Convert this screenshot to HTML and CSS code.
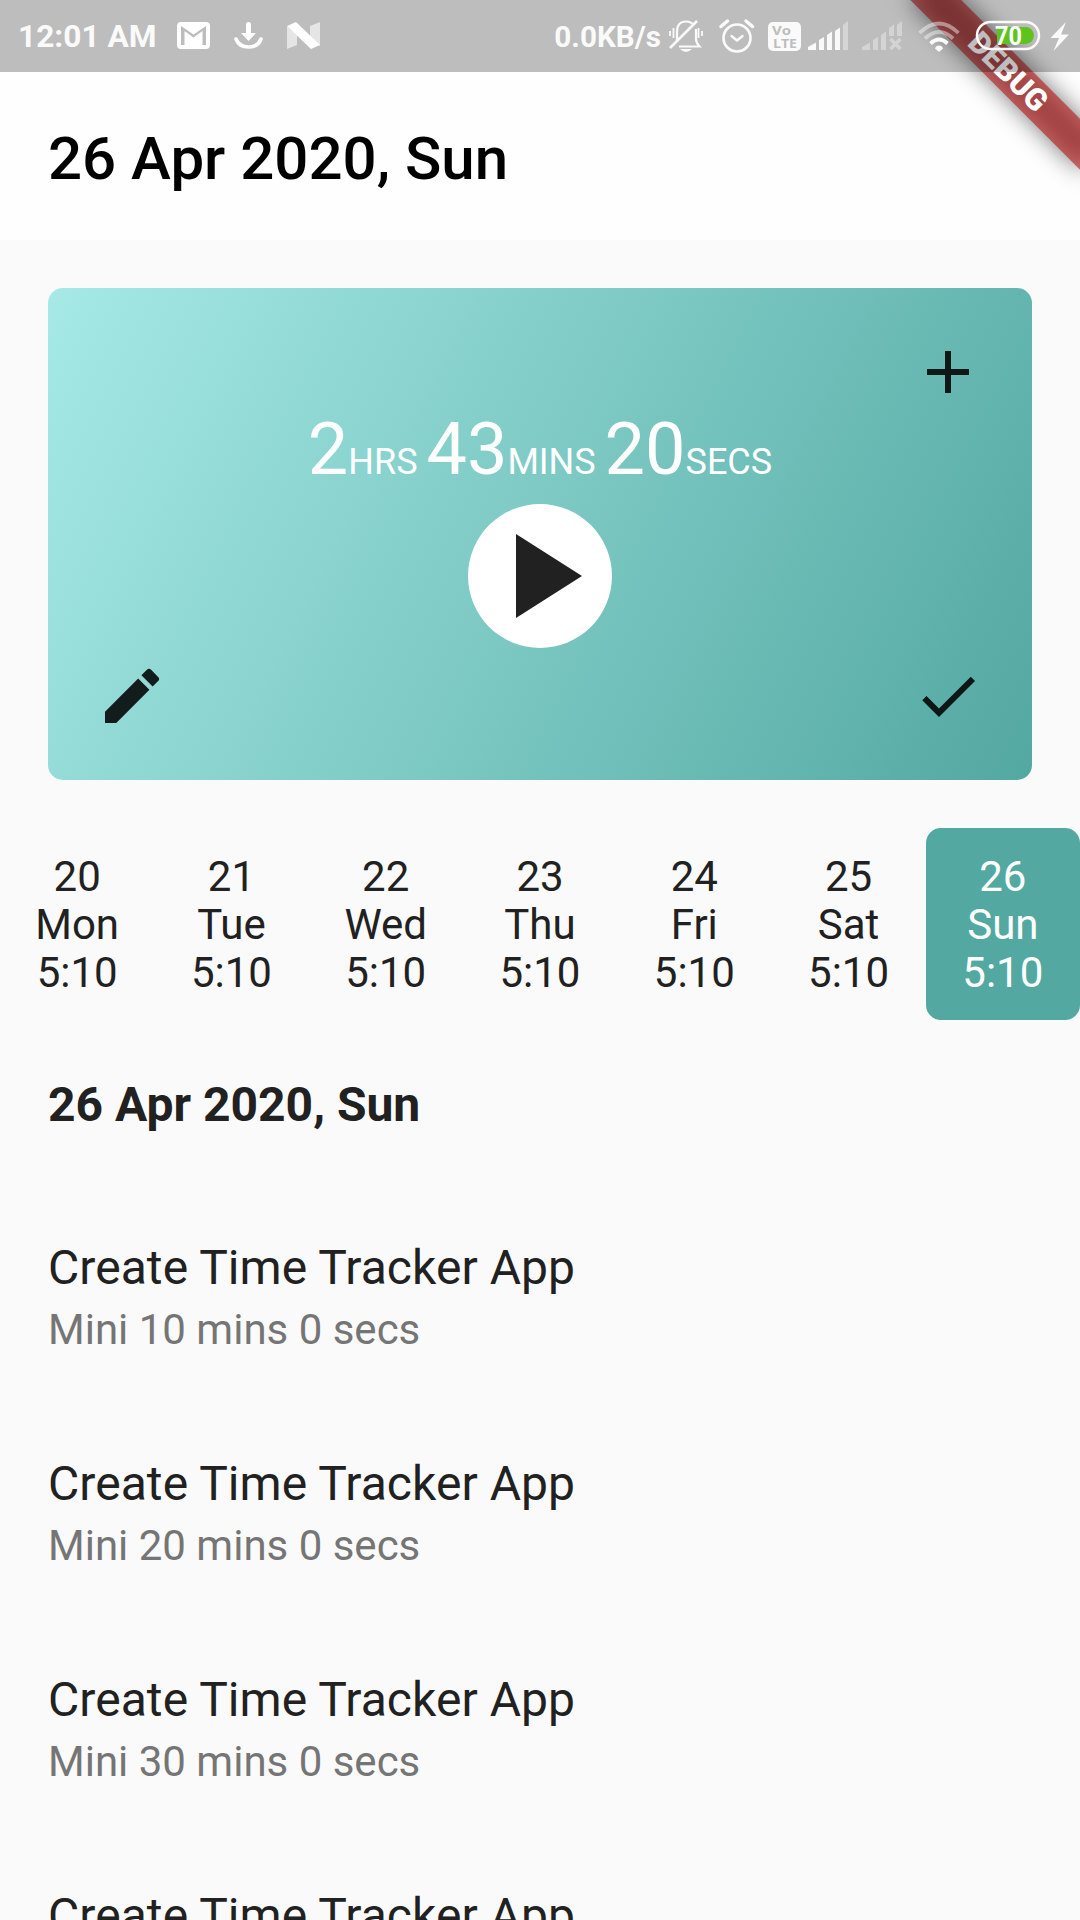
FILE: index.html
```html
<!DOCTYPE html>
<html lang="en">
<head>
<meta charset="utf-8">
<title>Time Tracker</title>
<link rel="stylesheet" href="styles.css">
</head>
<body>
<div class="screen">
  <header class="top">
    <div class="status">
      <span class="clock">12:01 AM</span>
      <svg class="icon" width="46" height="72" viewBox="170 0 46 72">
        <path fill="#fff" fill-rule="evenodd" d="M181 22h25a4 4 0 0 1 4 4v19a4 4 0 0 1-4 4h-25a4 4 0 0 1-4-4V26a4 4 0 0 1 4-4zM181 26v19h3.500V31l9 6.500 9-6.500v14h3.500V26l-12.500 8.600z"/>
      </svg>
      <svg class="icon" width="58" height="72" viewBox="216 0 58 72">
        <path fill="#fff" d="M246 24.500a2.500 2.500 0 0 1 5 0V33h5l-7.500 8-7.500-8h5z"/>
        <path d="M236 39q3 8 12.500 8T261 39" fill="none" stroke="#fff" stroke-width="3.600" stroke-linecap="round"/>
      </svg>
      <svg class="icon" width="50" height="72" viewBox="274 0 50 72">
        <path fill="#fff" opacity=".6" d="M287 26l10 9v10l-10 4zM320 22v24l-10-9V26z"/>
        <path fill="#fff" d="M287 26l9-4 24 23-9 4z"/>
      </svg>
      <span class="speed">0.0KB/s</span>
      <svg class="icon" width="48" height="72" viewBox="664 0 48 72">
        <g fill="none" stroke="#fafafa" stroke-width="2.200">
          <path d="M677 40V32q0-10.500 9-10.500 5 0 7.500 3.500M696 29v10q0 4 3.500 7.500H679"/>
          <path d="M670 48l27-27" stroke-width="2.500"/>
          <path d="M670 31v5M673.500 28v10M702 31v5M698.500 28v10" stroke-width="1.800"/>
        </g>
        <path fill="#fafafa" d="M680 49h12q-6 6-12 0z"/>
      </svg>
      <svg class="icon" width="50" height="72" viewBox="712 0 50 72">
        <g fill="none" stroke="#fafafa" stroke-width="2.700" stroke-linecap="round" stroke-linejoin="round">
          <circle cx="737" cy="38" r="13.500"/>
          <path d="M731.500 36l5.500 4.500 5.500-4.500" stroke-width="2.400"/>
          <path d="M721 26.500l6.500-5.500M752.500 26.500L746 21" stroke-width="3.500"/>
        </g>
      </svg>
      <svg class="icon" width="43" height="72" viewBox="762 0 43 72">
        <rect x="768" y="22" width="33" height="29" rx="5" fill="#fafafa"/>
        <text class="volte" x="772" y="34.500" textLength="19" lengthAdjust="spacingAndGlyphs">Vo</text>
        <text class="volte" x="773" y="47.500" textLength="24" lengthAdjust="spacingAndGlyphs">LTE</text>
      </svg>
      <svg class="icon" width="47" height="72" viewBox="805 0 47 72">
        <path fill="#fafafa" d="M808 50v-3l8-4.500V50zM819 50V40l5-3v13zM827 50V35l5-3.500V50zM835 50V31l5-3.500V50z"/>
        <path fill="#fafafa" opacity=".4" d="M843 50V25l5-4v29z"/>
      </svg>
      <svg class="icon" width="60" height="72" viewBox="852 0 60 72">
        <g opacity=".38">
          <path fill="#fafafa" d="M862 50v-3l8-4.500V50zM873 50V40l5-3v13zM881 50V35l5-3.500V50zM889 36v-8l5-3.500V36zM897 36V25l5-4v15z"/>
          <path d="M890.500 39l10 10M900.500 39l-10 10" stroke="#fafafa" stroke-width="3.500"/>
        </g>
      </svg>
      <svg class="icon" width="58" height="72" viewBox="912 0 58 72">
        <g fill="none" stroke="#fafafa" stroke-width="3.800">
          <path opacity=".45" d="M919.500 33q19.500-19 39 0M925 38.500q14-13 28 0"/>
          <path d="M930.500 43.500q8.500-8 17 0"/>
        </g>
        <path fill="#fafafa" d="M939 52l-4-3.500q1-3 4-3t4 3z"/>
      </svg>
      <svg class="icon" width="76" height="72" viewBox="970 0 76 72">
        <path fill="#5ec31f" d="M997 27h28.500a8.500 8.500 0 0 1 0 17H997z"/>
        <rect x="977" y="22" width="62" height="27" rx="13.500" fill="none" stroke="#fafafa" stroke-width="2.500"/>
        <text class="charge" x="995" y="44.500" textLength="27" lengthAdjust="spacingAndGlyphs">70</text>
      </svg>
      <svg class="icon" width="34" height="72" viewBox="1046 0 34 72">
        <path fill="#fafafa" d="M1066 22l-15.500 16h8.500l-5.500 13 15.500-16.500h-8z"/>
      </svg>
    </div>
    <h1 class="title">26 Apr 2020, Sun</h1>
    <div class="banner">DEBUG</div>
  </header>

  <main>
    <section class="timer">
      <svg class="action add" viewBox="0 0 24 24"><path d="M19 13h-6v6h-2v-6H5v-2h6V5h2v6h6v2z"/></svg>
      <div class="time"><span>2</span><small>HRS </small><span>43</span><small>MINS </small><span>20</span><small>SECS</small></div>
      <div class="play"><svg viewBox="0 0 24 24"><path d="M8 5v14l11-7z"/></svg></div>
      <svg class="action edit" viewBox="0 0 24 24"><path d="M3 17.250V21h3.750L17.810 9.940l-3.750-3.750L3 17.250zM20.710 7.040a.996.996 0 0 0 0-1.410l-2.340-2.340a.996.996 0 0 0-1.410 0l-1.830 1.830 3.750 3.750 1.830-1.830z"/></svg>
      <svg class="action done" viewBox="0 0 24 24"><path d="M9 16.170L4.830 12l-1.420 1.410L9 19 21 7l-1.410-1.410z"/></svg>
    </section>

    <section class="week">
      <div class="day"><span>20</span><span>Mon</span><span>5:10</span></div>
      <div class="day"><span>21</span><span>Tue</span><span>5:10</span></div>
      <div class="day"><span>22</span><span>Wed</span><span>5:10</span></div>
      <div class="day"><span>23</span><span>Thu</span><span>5:10</span></div>
      <div class="day"><span>24</span><span>Fri</span><span>5:10</span></div>
      <div class="day"><span>25</span><span>Sat</span><span>5:10</span></div>
      <div class="day selected"><span>26</span><span>Sun</span><span>5:10</span></div>
    </section>

    <h2 class="heading">26 Apr 2020, Sun</h2>
    <ul class="tasks">
      <li class="task"><span class="name">Create Time Tracker App</span><span class="spent">Mini 10 mins 0 secs</span></li>
      <li class="task"><span class="name">Create Time Tracker App</span><span class="spent">Mini 20 mins 0 secs</span></li>
      <li class="task"><span class="name">Create Time Tracker App</span><span class="spent">Mini 30 mins 0 secs</span></li>
      <li class="task"><span class="name">Create Time Tracker App</span></li>
    </ul>
  </main>
</div>
</body>
</html>
```

FILE: styles.css
```css
* { box-sizing: border-box; }

body {
  margin: 0;
  background: #fafafa;
  color: #212121;
  font-family: Roboto, sans-serif;
}

.screen {
  width: 1080px;
  height: 1920px;
  overflow: hidden;
}

.top {
  position: relative;
  height: 240px;
  background: #fefefe;
  overflow: hidden;
}

.status {
  position: relative;
  z-index: 2;
  display: flex;
  height: 72px;
  background: rgba(0, 0, 0, 0.255);
  color: #fafafa;
  font-size: 31.700px;
  font-weight: 700;
  line-height: 73px;
  white-space: nowrap;
}

.icon { flex: none; display: block; }

.clock {
  width: 170px;
  padding-left: 18px;
}

.speed {
  width: 340px;
  padding-right: 3px;
  font-size: 29.700px;
  text-align: right;
}

.volte {
  fill: #bdbdbd;
  font: 700 12.500px "Open Sans", sans-serif;
}

.charge {
  fill: #fafafa;
  font: 700 26px Roboto, sans-serif;
}

.title {
  margin: 0;
  padding: 51px 48px 0;
  color: #000;
  font-size: 60px;
  font-weight: 500;
  line-height: 72px;
}

/* Corner ribbon, rotated round the top right corner of the screen */
.banner {
  position: absolute;
  z-index: 1;
  top: 84px;
  left: 960px;
  width: 240px;
  height: 36px;
  color: #fff;
  font-size: 30.600px;
  font-weight: 900;
  line-height: 36px;
  text-align: center;
  transform: rotate(45deg);
  transform-origin: 120px -84px;
}

.banner::before,
.banner::after {
  content: "";
  position: absolute;
  z-index: -1;
  inset: 0;
}

/* Soft shadow that also darkens the translucent ribbon */
.banner::before {
  background: rgba(0, 0, 0, 0.52);
  filter: blur(12px);
}

.banner::after { background: rgba(183, 28, 28, 0.627); }

.timer {
  display: grid;
  grid-template-columns: 72px 1fr 72px;
  grid-template-rows: 72px 96px 156px 72px;
  height: 492px;
  margin: 48px 48px 0;
  padding: 48px;
  border-radius: 15px;
  background: linear-gradient(116.565deg, #a6e9e6, #53a8a1);
}

.action {
  width: 72px;
  height: 72px;
  fill: rgba(0, 0, 0, 0.870);
}

.add { grid-area: 1 / 3; }
.edit { grid-area: 4 / 1; }
.done { grid-area: 4 / 3; }

.time {
  grid-area: 1 / 1 / 3 / 4;
  align-self: end;
  color: #fff;
  font-size: 72px;
  line-height: 84px;
  text-align: center;
  white-space: pre;
}

.time small { font-size: 36px; }

.play {
  grid-area: 3 / 2;
  justify-self: center;
  width: 144px;
  height: 144px;
  border-radius: 50%;
  background: #fff;
  fill: #212121;
}

.play svg { display: block; }

.week {
  display: grid;
  grid-template-columns: repeat(7, 1fr);
  margin-top: 48px;
}

.day {
  display: flex;
  flex-direction: column;
  align-items: center;
  padding: 25px 0 23px;
  border-radius: 15px;
  font-size: 42px;
  line-height: 48px;
}

.selected {
  background: #53a8a1;
  color: #fff;
}

.heading {
  margin: 0;
  padding: 57px 48px 0;
  font-size: 48px;
  font-weight: 700;
  line-height: 56px;
}

.tasks {
  margin: 0;
  padding: 48px 0 0;
  list-style: none;
}

.task {
  display: flex;
  flex-direction: column;
  height: 216px;
  padding: 59px 48px 0;
}

.name {
  font-size: 48px;
  letter-spacing: 0.060px;
  line-height: 56px;
}

.spent {
  padding-top: 9px;
  color: #757575;
  font-size: 42px;
  line-height: 50px;
}
```
